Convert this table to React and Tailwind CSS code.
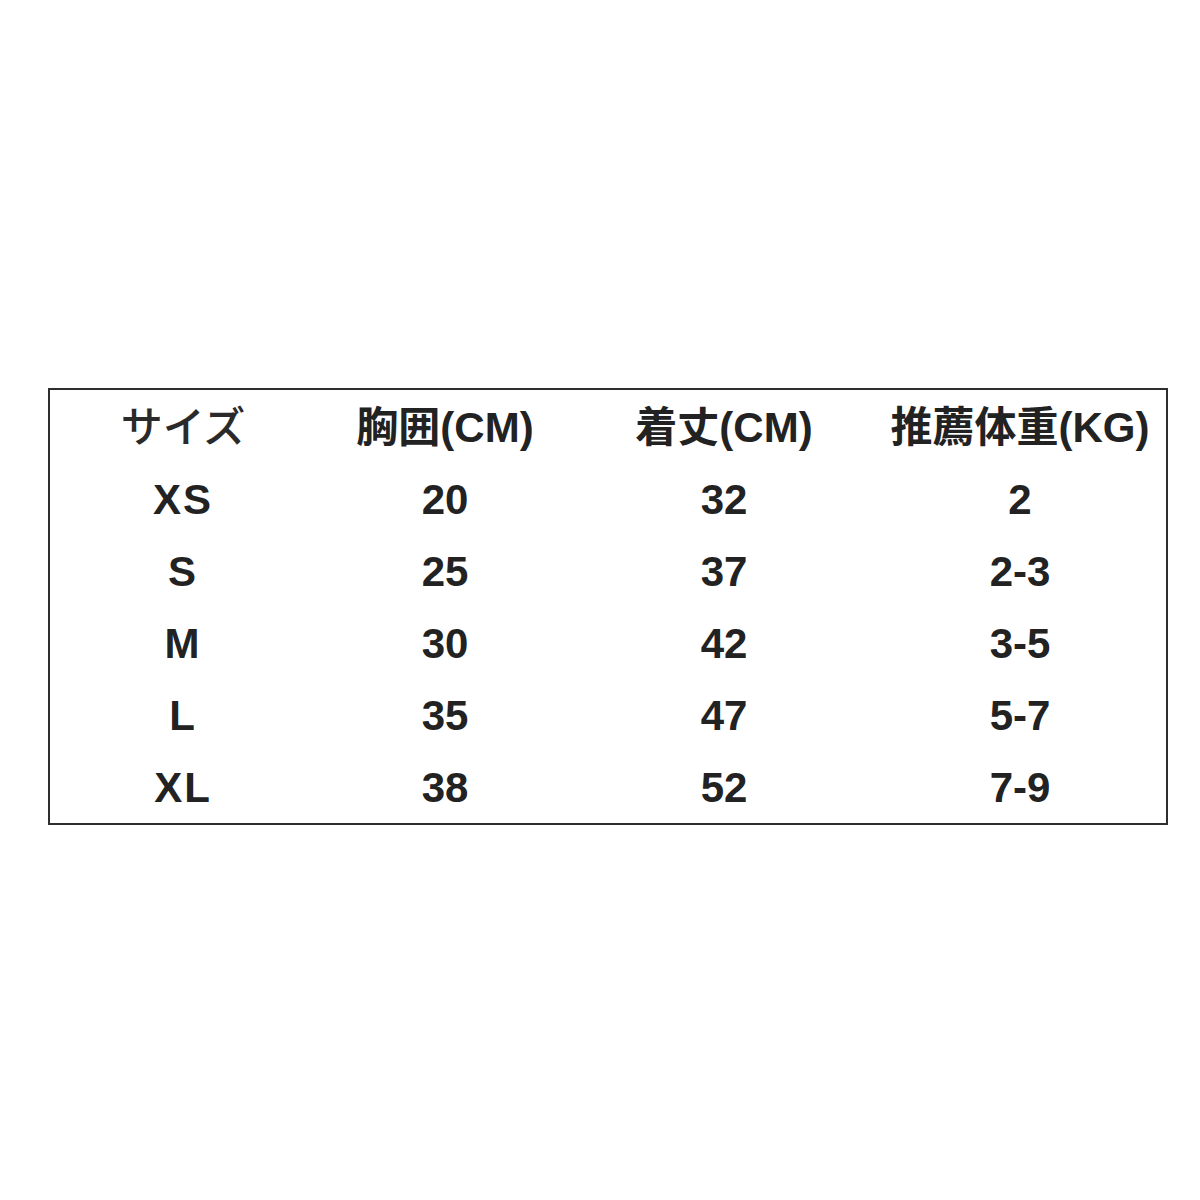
const headers = ['サイズ', '胸囲(CM)', '着丈(CM)', '推薦体重(KG)'];

const rows = [
  ['XS', '20', '32', '2'],
  ['S', '25', '37', '2-3'],
  ['M', '30', '42', '3-5'],
  ['L', '35', '47', '5-7'],
  ['XL', '38', '52', '7-9'],
];

export default function App() {
  return (
    <div className="w-[1200px] h-[1200px] bg-white flex flex-col pt-[388px] pl-[48px]">
      <div
        className="w-[1120px] h-[437px] border-2 border-[#2e2e2e] pt-[1px] text-[#222]"
        style={{ fontFamily: '"Liberation Sans", Arial, "Noto Sans CJK JP", sans-serif' }}
      >
        {/* header */}
        <div className="grid grid-cols-[266px_258px_300px_1fr] h-[72px] items-center text-center text-[42px]">
          {headers.map((h, i) => (
            <div key={h} className={i === 0 ? 'font-medium text-[#2a2a2a]' : 'font-bold'}>
              {h}
            </div>
          ))}
        </div>
        {rows.map((r) => (
          <div
            key={r[0]}
            className="grid grid-cols-[266px_258px_300px_1fr] h-[72px] items-center text-center text-[42px] font-bold"
          >
            {r.map((c, i) => (
              <div key={i} className={i === 0 ? 'tracking-[2px]' : ''}>
                {c}
              </div>
            ))}
          </div>
        ))}
      </div>
    </div>
  );
}
